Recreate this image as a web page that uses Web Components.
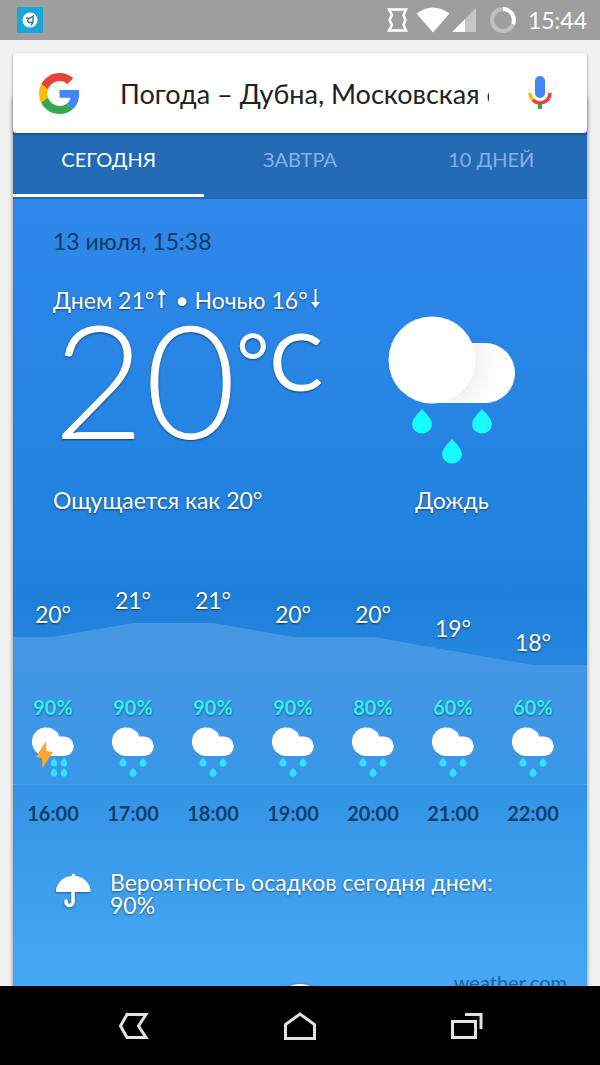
<!DOCTYPE html>
<html lang="ru">
<head>
<meta charset="utf-8">
<meta name="viewport" content="width=device-width, initial-scale=1">
<title>Погода</title>
<style>
  body {
    margin: 0;
    height: 100vh;
    display: flex;
    flex-direction: column;
    overflow: hidden;
    background: #f0f0f0;
    font-family: Lato, "Open Sans", sans-serif;
  }
  main {
    flex: 1;
    min-height: 0;
    overflow: hidden;
    padding: 13px 13px 0;
  }
</style>
</head>
<body>
  <status-bar time="15:44"></status-bar>
  <main>
    <search-box value="Погода – Дубна, Московская область"></search-box>
    <weather-card>
      <weather-tabs slot="tabs"></weather-tabs>
      <current-weather temp="20" icon="rain">
        <span slot="date">13 июля, 15:38</span>
        <span slot="feels">Ощущается как 20°</span>
        <span slot="condition">Дождь</span>
      </current-weather>
      <hourly-forecast></hourly-forecast>
      <rain-chance>Вероятность осадков сегодня днем: 90%</rain-chance>
      <card-footer></card-footer>
    </weather-card>
  </main>
  <nav-bar></nav-bar>

<script>
class StatusBar extends HTMLElement {
  constructor() {
    super();
    this.attachShadow({ mode: "open" });
    this.shadowRoot.innerHTML = `
      <style>
        :host {
          display: flex;
          flex: none;
          align-items: center;
          justify-content: space-between;
          height: 40px;
          padding: 0 13px 0 16px;
          background: #9e9e9e;
          color: #fff;
          font-size: 23px;
          line-height: 40px;
        }
        svg { display: block; }
        .right { display: flex; align-items: center; }
        .right span { margin-left: 11px; }
      </style>
      <svg width="28" height="28" viewBox="0 0 28 28">
        <rect x="1" y="1" width="26" height="26" fill="#1ba5d8"/>
        <circle cx="14" cy="14" r="7.500" fill="#fff"/>
        <path d="M10 12c2 0 3 1 5-.5l3-2M14.500 11.500c-3 2-4 4-1.500 5h4M17 9.500v7l-2 3" fill="none" stroke="#277396" stroke-width="1.300"/>
      </svg>
      <div class="right">
        <svg width="131" height="28" viewBox="386 6 131 28">
          <path d="M389 9.500H406L403.500 15L405.500 20L403.500 25L406 30.500H389L392 25L389.500 20L392 15Z" fill="none" stroke="#fff" stroke-width="2.500"/>
          <path d="M416.500 13.500Q433 1.500 449.500 13.500L433 32.500Z" fill="#fff"/>
          <path d="M465 19L476 8V32H465Z" fill="#c6c6c6"/>
          <path d="M452 32L465 19V32Z" fill="#fff"/>
          <circle cx="503" cy="20" r="11" fill="none" stroke="#c0c0c0" stroke-width="4"/>
          <path d="M503 9A11 11 0 0 1 513 24" fill="none" stroke="#fff" stroke-width="4"/>
        </svg>
        <span>${this.getAttribute("time")}</span>
      </div>
    `;
  }
}

class SearchBox extends HTMLElement {
  constructor() {
    super();
    this.attachShadow({ mode: "open" });
    this.shadowRoot.innerHTML = `
      <style>
        :host {
          display: flex;
          align-items: center;
          position: relative;
          z-index: 1;
          height: 80px;
          padding: 0 34px 0 26px;
          box-sizing: border-box;
          background: #fff;
          border-radius: 3px;
          box-shadow: 0 1px 3px rgba(0, 0, 0, .4);
        }
        svg { display: block; flex: none; }
        input {
          flex: 1;
          min-width: 0;
          height: 40px;
          margin: 2px 38px 0 40px;
          padding: 0;
          border: 0;
          outline: 0;
          background: none;
          color: #212121;
          font: 27px/40px Lato, "Open Sans", sans-serif;
        }
        button {
          flex: none;
          margin: 0;
          padding: 0;
          border: 0;
          background: none;
        }
      </style>
      <svg width="41" height="41" viewBox="0 0 48 48">
        <path fill="#EA4335" d="M24 9.500c3.540 0 6.710 1.220 9.210 3.600l6.850-6.850C35.900 2.380 30.470 0 24 0 14.620 0 6.510 5.380 2.560 13.220l7.980 6.190C12.430 13.720 17.740 9.500 24 9.500z"/>
        <path fill="#4285F4" d="M46.980 24.550c0-1.570-.15-3.090-.38-4.550H24v9.020h12.940c-.58 2.960-2.260 5.480-4.780 7.180l7.730 6c4.510-4.180 7.090-10.360 7.090-17.650z"/>
        <path fill="#FBBC05" d="M10.530 28.590c-.48-1.450-.76-2.990-.76-4.590s.27-3.140.76-4.590l-7.980-6.190C.92 16.460 0 20.120 0 24c0 3.880.92 7.540 2.560 10.780l7.970-6.190z"/>
        <path fill="#34A853" d="M24 48c6.480 0 11.930-2.130 15.890-5.810l-7.730-6c-2.150 1.450-4.920 2.300-8.160 2.300-6.260 0-11.570-4.220-13.470-9.910l-7.980 6.190C6.510 42.620 14.620 48 24 48z"/>
      </svg>
      <input type="text" aria-label="Поиск">
      <button type="button" aria-label="Голосовой поиск">
        <svg width="26" height="34" viewBox="0 0 26 34">
          <rect x="8" y="0" width="10" height="22" rx="5" fill="#4285f4"/>
          <path d="M3 17a10 10 0 0 0 4 8" fill="none" stroke="#fbbc05" stroke-width="3.500"/>
          <path d="M6 24a10 10 0 0 0 17-7" fill="none" stroke="#ea4335" stroke-width="3.500"/>
          <rect x="11" y="28" width="4" height="5" fill="#34a853"/>
        </svg>
      </button>
    `;
  }

  connectedCallback() {
    this.shadowRoot.querySelector("input").value = this.getAttribute("value");
  }
}

class WeatherCard extends HTMLElement {
  constructor() {
    super();
    this.attachShadow({ mode: "open" });
    this.shadowRoot.innerHTML = `
      <style>
        :host {
          display: block;
          margin-top: -37px;
          padding-top: 37px;
          background: #236ab7;
          border-radius: 3px;
          box-shadow: 0 1px 4px rgba(0, 0, 0, .45);
          color: #fff;
          font-size: 23px;
          line-height: 28px;
        }
        .body {
          background: linear-gradient(#2e88ea, #2383e0 300px, #1f80dc 400px, #3798e9 620px, #46a7f5 790px);
        }
      </style>
      <slot name="tabs"></slot>
      <div class="body"><slot></slot></div>
    `;
  }
}

class WeatherTabs extends HTMLElement {
  constructor() {
    super();
    this.attachShadow({ mode: "open" });
    this.shadowRoot.innerHTML = `
      <style>
        :host {
          display: grid;
          grid-template-columns: repeat(3, 1fr);
          padding-bottom: 2px;
        }
        button {
          height: 64px;
          margin: 0;
          padding: 0 0 9px;
          border: 0;
          border-bottom: 3px solid transparent;
          background: none;
          color: #86b1e2;
          font: 20px/24px Lato, "Open Sans", sans-serif;
        }
        button[aria-selected="true"] {
          color: #fff;
          border-color: #fff;
        }
      </style>
      <button type="button" role="tab" aria-selected="true">СЕГОДНЯ</button>
      <button type="button" role="tab" aria-selected="false">ЗАВТРА</button>
      <button type="button" role="tab" aria-selected="false">10 ДНЕЙ</button>
    `;
    this.shadowRoot.addEventListener("click", this.handleClick.bind(this));
  }

  connectedCallback() {
    this.setAttribute("role", "tablist");
  }

  handleClick(event) {
    const tab = event.target.closest("button");
    if (!tab) return;
    this.shadowRoot.querySelectorAll("button").forEach((button) => {
      button.setAttribute("aria-selected", String(button === tab));
    });
  }
}

const WEATHER_ICONS = {
  rain: `
    <svg viewBox="0 0 128 148">
      <defs>
        <radialGradient id="shade" gradientUnits="userSpaceOnUse" cx="44" cy="44" r="68">
          <stop offset=".62" stop-color="#f2f2f2"/>
          <stop offset="1" stop-color="#fff"/>
        </radialGradient>
      </defs>
      <path d="M44 27H97A30 30 0 0 1 97 87H44Z" fill="url(#shade)"/>
      <circle cx="44" cy="44" r="43.500" fill="#fff"/>
      <path id="drop" d="M34 93Q44 103 44 108A10 9.500 0 0 1 24 108Q24 103 34 93Z" fill="#18fbff"/>
      <use href="#drop" x="60"/>
      <use href="#drop" x="30" y="30"/>
    </svg>`,
  showers: `
    <svg viewBox="0 0 42 50">
      <path d="M14 .5A14 14 0 0 1 27.500 9.500H32A9.700 9.700 0 0 1 32 29H14A14 14.200 0 0 1 14 .5Z" fill="#fff"/>
      <path id="drop" d="M11 31Q14.500 34 14.500 36A3.500 3.500 0 0 1 7.500 36Q7.500 34 11 31Z" fill="#2ce6fb"/>
      <use href="#drop" x="20"/>
      <use href="#drop" x="10" y="10"/>
    </svg>`,
  storm: `
    <svg viewBox="0 0 42 50">
      <path d="M14 .5A14 14 0 0 1 27.500 9.500H32A9.700 9.700 0 0 1 32 29H14A14 14.200 0 0 1 14 .5Z" fill="#fff"/>
      <path d="M14 14L4 30L10 31L10.500 41L21 25L14.500 24Z" fill="#fba635"/>
      <path id="drop" d="M22 31Q25.200 34 25.200 36A3.200 3.500 0 0 1 18.800 36Q18.800 34 22 31Z" fill="#2ce6fb"/>
      <use href="#drop" x="10"/>
      <use href="#drop" y="10"/>
      <use href="#drop" x="10" y="10"/>
    </svg>`,
};

class WeatherIcon extends HTMLElement {
  constructor() {
    super();
    this.attachShadow({ mode: "open" });
    this.shadowRoot.innerHTML = `
      <style>
        :host { display: block; }
        svg { display: block; width: 100%; height: 100%; }
      </style>
      ${WEATHER_ICONS[this.getAttribute("name")]}
    `;
  }
}

class CurrentWeather extends HTMLElement {
  constructor() {
    super();
    this.attachShadow({ mode: "open" });
    this.shadowRoot.innerHTML = `
      <style>
        :host {
          display: block;
          padding: 28px 71px 0 40px;
        }
        .date { color: #133a63; }
        .row {
          display: flex;
          align-items: flex-end;
          justify-content: space-between;
          margin-top: 31px;
          text-shadow: 0 1px 2px rgba(0, 0, 0, .5);
        }
        .range { display: flex; }
        .range svg { margin: 3px 0 0 2px; filter: drop-shadow(0 1px 1px rgba(0, 0, 0, .4)); }
        .range span + svg + span { margin-left: 8px; }
        .temp {
          display: flex;
          height: 172px;
          font-size: 158px;
          font-weight: 300;
          line-height: 128px;
        }
        .temp sup {
          font-size: 80px;
          font-weight: 400;
          line-height: 92px;
        }
        .side { text-align: center; }
        weather-icon {
          width: 128px;
          height: 148px;
          margin-bottom: 22px;
        }
      </style>
      <div class="date"><slot name="date"></slot></div>
      <div class="row">
        <div>
          <div class="range">
            <span>Днем 21°</span>
            <svg width="11" height="20" viewBox="0 0 11 20"><path d="M5.500 19V3" stroke="#fff" stroke-width="2"/><path d="M1 6L5.500 0L10 6Z" fill="#fff"/></svg>
            <span>• Ночью 16°</span>
            <svg width="11" height="20" viewBox="0 0 11 20"><path d="M5.500 0V16" stroke="#fff" stroke-width="2"/><path d="M1 13L5.500 19L10 13Z" fill="#fff"/></svg>
          </div>
          <div class="temp"><span>${this.getAttribute("temp")}</span><sup>°C</sup></div>
          <div><slot name="feels"></slot></div>
        </div>
        <div class="side">
          <weather-icon name="${this.getAttribute("icon")}"></weather-icon>
          <slot name="condition"></slot>
        </div>
      </div>
    `;
  }
}

const HOURS = [
  { time: "16:00", temp: 20, rain: 90, icon: "storm" },
  { time: "17:00", temp: 21, rain: 90, icon: "showers" },
  { time: "18:00", temp: 21, rain: 90, icon: "showers" },
  { time: "19:00", temp: 20, rain: 90, icon: "showers" },
  { time: "20:00", temp: 20, rain: 80, icon: "showers" },
  { time: "21:00", temp: 19, rain: 60, icon: "showers" },
  { time: "22:00", temp: 18, rain: 60, icon: "showers" },
];
const COLUMN = 80; // width of one hour
const DEGREE = 14; // height of one degree on the chart

class HourlyForecast extends HTMLElement {
  constructor() {
    super();
    const max = Math.max(...HOURS.map((hour) => hour.temp));
    const drop = (hour) => (max - hour.temp) * DEGREE;
    const line = HOURS.map((hour, i) => `${i * COLUMN + COLUMN / 2},${drop(hour)}`);
    const first = drop(HOURS[0]);
    const last = drop(HOURS[HOURS.length - 1]);

    this.attachShadow({ mode: "open" });
    this.shadowRoot.innerHTML = `
      <style>
        :host {
          display: block;
          position: relative;
          margin-top: 72px;
          overflow: hidden;
        }
        .chart {
          position: absolute;
          top: 37px;
          left: 0;
          width: 100%;
          height: 162px;
        }
        .hours {
          position: relative;
          display: grid;
          grid-auto-flow: column;
          grid-auto-columns: ${COLUMN}px;
          text-align: center;
        }
        .temp {
          height: 110px;
          box-sizing: border-box;
          text-shadow: 0 1px 2px rgba(0, 0, 0, .6);
        }
        .rain {
          color: #2ff0f5;
          font-size: 20px;
          font-weight: 700;
          line-height: 22px;
          text-shadow: 0 1px 2px rgba(0, 0, 0, .5);
        }
        weather-icon {
          width: 42px;
          height: 50px;
          margin: 9px auto 8px;
        }
        .time {
          padding-top: 17px;
          color: #133f69;
          font-size: 20px;
          font-weight: 700;
          line-height: 22px;
        }
      </style>
      <svg class="chart">
        <defs>
          <linearGradient id="fade" x1="0" y1="0" x2="0" y2="1">
            <stop offset="0" stop-color="#fff" stop-opacity=".17"/>
            <stop offset="1" stop-color="#fff" stop-opacity=".03"/>
          </linearGradient>
        </defs>
        <polygon points="0,${first} ${line.join(" ")} 2000,${last} 2000,162 0,162" fill="url(#fade)"/>
        <rect y="161" width="100%" height="1" fill="#fff" fill-opacity=".1"/>
      </svg>
      <div class="hours">
        ${HOURS.map((hour) => `
          <div>
            <div class="temp" style="padding-top: ${drop(hour)}px">${hour.temp}°</div>
            <div class="rain">${hour.rain}%</div>
            <weather-icon name="${hour.icon}"></weather-icon>
            <div class="time">${hour.time}</div>
          </div>`).join("")}
      </div>
    `;
  }
}

class RainChance extends HTMLElement {
  constructor() {
    super();
    this.attachShadow({ mode: "open" });
    this.shadowRoot.innerHTML = `
      <style>
        :host {
          display: flex;
          gap: 18px;
          padding: 47px 72px 0 43px;
          line-height: 23px;
          text-shadow: 0 1px 2px rgba(0, 0, 0, .5);
        }
        svg { flex: none; filter: drop-shadow(0 1px 1px rgba(0, 0, 0, .4)); }
      </style>
      <svg width="36" height="38" viewBox="0 0 36 38">
        <path d="M0 21A17 15.500 0 0 1 15.500 5Q15.500 2.500 17.500 2.500Q19.500 2.500 19.500 5A17 15.500 0 0 1 34.500 21Z" fill="#fff"/>
        <path d="M17 20V31A3.500 3.500 0 0 1 10 31V30" fill="none" stroke="#fff" stroke-width="3.500" stroke-linecap="round"/>
      </svg>
      <div><slot></slot></div>
    `;
  }
}

class CardFooter extends HTMLElement {
  constructor() {
    super();
    this.attachShadow({ mode: "open" });
    this.shadowRoot.innerHTML = `
      <style>
        :host {
          display: grid;
          grid-template-columns: 1fr 56px 1fr;
          padding: 53px 20px 60px;
        }
        button {
          grid-column: 2;
          width: 56px;
          height: 56px;
          margin-top: 14px;
          padding: 0;
          border: 0;
          border-radius: 50%;
          background: #fff;
          box-shadow: 0 1px 4px rgba(0, 0, 0, .4);
        }
        a {
          justify-self: end;
          color: #1d5f9f;
          font-size: 20px;
          line-height: 24px;
          text-decoration: none;
        }
      </style>
      <button type="button" aria-label="Подробнее">
        <svg width="24" height="24" viewBox="0 0 24 24"><path d="M5 9L12 16L19 9" fill="none" stroke="#757575" stroke-width="2"/></svg>
      </button>
      <a href="#">weather.com</a>
    `;
  }
}

class NavBar extends HTMLElement {
  constructor() {
    super();
    this.attachShadow({ mode: "open" });
    this.shadowRoot.innerHTML = `
      <style>
        :host {
          display: flex;
          flex: none;
          align-items: center;
          justify-content: center;
          gap: 134px;
          height: 79px;
          background: #000;
        }
        button {
          margin: 0;
          padding: 0;
          border: 0;
          background: none;
        }
        svg { display: block; }
        path, rect { fill: none; stroke: #e2e2e2; stroke-width: 3; }
      </style>
      <button type="button" aria-label="Назад">
        <svg width="32" height="28" viewBox="0 0 32 28"><path d="M10 2.500H29L21.500 14L29 25.500H10L3.500 14Z"/></svg>
      </button>
      <button type="button" aria-label="Домой">
        <svg width="34" height="28" viewBox="0 0 34 28"><path d="M2.500 26.500V12.500L17 2L31.500 12.500V26.500Z"/></svg>
      </button>
      <button type="button" aria-label="Недавние">
        <svg width="32" height="28" viewBox="0 0 32 28"><rect x="1.500" y="9.500" width="23" height="16"/><path d="M14 2.500H30V17"/></svg>
      </button>
    `;
  }
}

customElements.define("weather-icon", WeatherIcon);
customElements.define("status-bar", StatusBar);
customElements.define("search-box", SearchBox);
customElements.define("weather-card", WeatherCard);
customElements.define("weather-tabs", WeatherTabs);
customElements.define("current-weather", CurrentWeather);
customElements.define("hourly-forecast", HourlyForecast);
customElements.define("rain-chance", RainChance);
customElements.define("card-footer", CardFooter);
customElements.define("nav-bar", NavBar);
</script>
</body>
</html>
